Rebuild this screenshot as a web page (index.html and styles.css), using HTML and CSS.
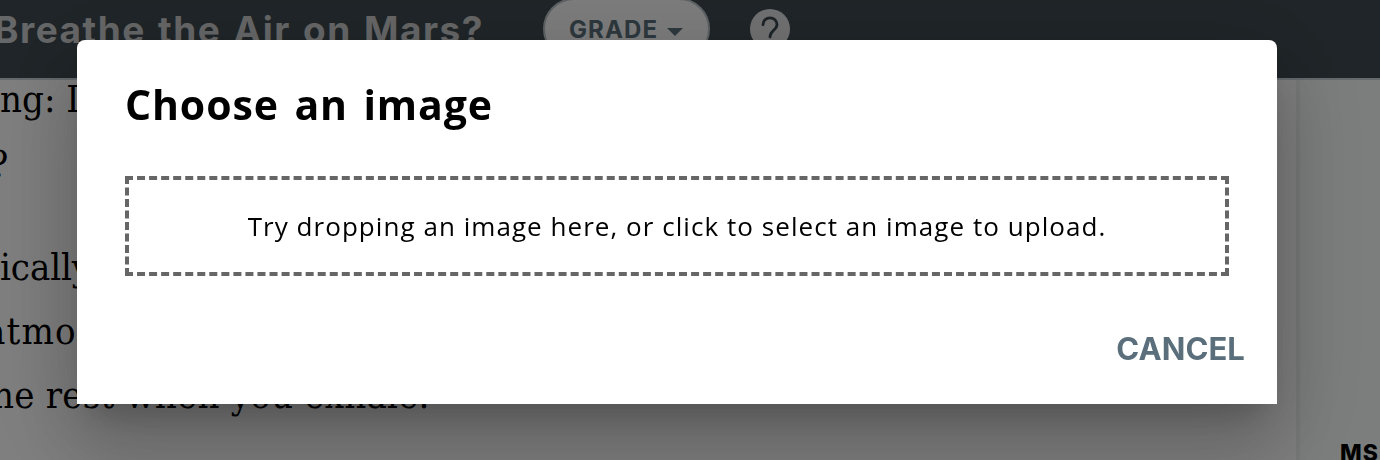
FILE: index.html
```
<!DOCTYPE html>
<html lang="en">
<head>
    <meta charset="UTF-8">
    <meta name="viewport" content="width=device-width, initial-scale=1.0">
    <title>Choose an image</title>
    <link rel="stylesheet" href="styles.css">
</head>
<body>
    <header class="header">
        <div class="header-title">Breathe the Air on Mars?</div>
        <button class="grade-button">
            <span class="grade-label">GRADE</span>
            <svg class="grade-arrow" width="16" height="8" viewBox="0 0 16 8"><path d="M0 0h16L8 8z" fill="currentColor"/></svg>
        </button>
        <svg class="help-icon" width="40" height="40" viewBox="0 0 40 40">
            <circle cx="20" cy="20" r="20" fill="#e3e4e6"/>
            <path d="M13 15.8c0-4 3.1-7 7-7s7 2.9 7 6.7c0 5.6-7 6.2-7 12.5" fill="none" stroke="#3a484f" stroke-width="2.8" stroke-linecap="round"/>
            <circle cx="20" cy="34" r="1.8" fill="#3a484f"/>
        </svg>
    </header>

    <div class="page">
        <main class="article">
            <p class="line line-heading">ng: I</p>
            <p class="line line-question">?</p>
            <p class="line line-first">ically</p>
            <p class="line line-second">atmo</p>
            <p class="line line-last">he rest when you exhale.</p>
        </main>
        <aside class="sidebar">
            <div class="sidebar-label">MS</div>
        </aside>
    </div>

    <div class="modal-overlay">
        <div class="modal">
            <h1 class="modal-title"><span>Choose an image</span></h1>
            <div class="drop-zone"><span class="drop-text">Try dropping an image here, or click to select an image to upload.</span></div>
            <div class="modal-footer">
                <button class="cancel-button">CANCEL</button>
            </div>
        </div>
    </div>
</body>
</html>
```
FILE: styles.css
```
* {
    margin: 0;
    padding: 0;
    box-sizing: border-box;
}

body {
    font-family: "Open Sans", "Noto Sans", sans-serif;
    background-color: #fff;
    color: #000;
    height: 460px;
    overflow: hidden;
}

button {
    border: none;
    background: none;
}

/* Header */
.header {
    display: flex;
    align-items: flex-start;
    height: 80px;
    background-color: #3f4b51;
    border-bottom: 2px solid #cbd5da;
}

.header-title {
    width: 549px;
    margin-left: -6px;
    line-height: 60px;
    font-family: Inter, sans-serif;
    font-size: 37px;
    font-weight: 700;
    letter-spacing: 1.5px;
    word-spacing: 2px;
    white-space: nowrap;
    color: #cdced0;
}

.grade-button {
    display: flex;
    align-items: center;
    gap: 9px;
    width: 167px;
    height: 62px;
    margin-top: -2px;
    padding-left: 24px;
    border: 2px solid #bcc5c9;
    border-radius: 31px;
    background-color: #fafafa;
    color: #5b717c;
}

.grade-label {
    font-family: Inter, sans-serif;
    font-size: 24px;
    font-weight: 650;
    letter-spacing: 1.1px;
}

.grade-arrow {
    margin-top: 5px;
}

.help-icon {
    margin: 9px 0 0 40px;
}

/* Page behind the dialog */
.page {
    display: flex;
    height: 380px;
}

.article {
    width: 1296px;
    overflow: hidden;
    font-family: "DejaVu Serif Condensed", "DejaVu Serif", serif;
    font-size: 38px;
}

.line {
    height: 64px;
    line-height: 64px;
    white-space: nowrap;
}

.line-heading {
    margin-top: -13px;
}

.line-question {
    margin-left: -10px;
    padding-top: 1px;
}

.line-first {
    margin-top: 40px;
    letter-spacing: -0.1px;
}

.line-second {
    margin-left: -15px;
    letter-spacing: 1.2px;
}

.line-last {
    margin-left: -8px;
    letter-spacing: 0.2px;
}

.sidebar {
    flex: 1;
    border-left: 4px solid #eef2f1;
    background-color: #f8fcfa;
}

.sidebar-label {
    padding: 358px 0 0 40px;
    font-family: Inter, sans-serif;
    font-size: 23px;
    line-height: 30px;
    font-weight: 800;
    letter-spacing: 1px;
}

/* Dialog */
.modal-overlay {
    position: fixed;
    inset: 0;
    padding: 40px 103px 56px 77px;
    background-color: rgba(0, 0, 0, 0.5);
}

.modal {
    height: 364px;
    padding: 0 48px;
    border-radius: 8px 8px 0 0;
    background-color: #fff;
    box-shadow: 0 22px 30px -14px rgba(0, 0, 0, 0.2),
        0 48px 76px 6px rgba(0, 0, 0, 0.14),
        0 18px 92px 16px rgba(0, 0, 0, 0.12);
}

.modal-title {
    height: 136px;
    padding-top: 32px;
    font-size: 41px;
    line-height: 65px;
    font-weight: 700;
    letter-spacing: 0.9px;
    word-spacing: 4px;
}

.drop-zone {
    display: flex;
    align-items: center;
    justify-content: center;
    height: 100px;
    border: 4px dashed #666;
}

.drop-text {
    font-size: 26px;
    letter-spacing: 1.05px;
    white-space: nowrap;
}

.modal-footer {
    display: flex;
    justify-content: flex-end;
    margin-right: -16px;
    padding-top: 52px;
}

.cancel-button {
    font-family: Inter, sans-serif;
    font-size: 31px;
    line-height: 42px;
    font-weight: 650;
    letter-spacing: 0.1px;
    color: #5a6f7b;
}
```
